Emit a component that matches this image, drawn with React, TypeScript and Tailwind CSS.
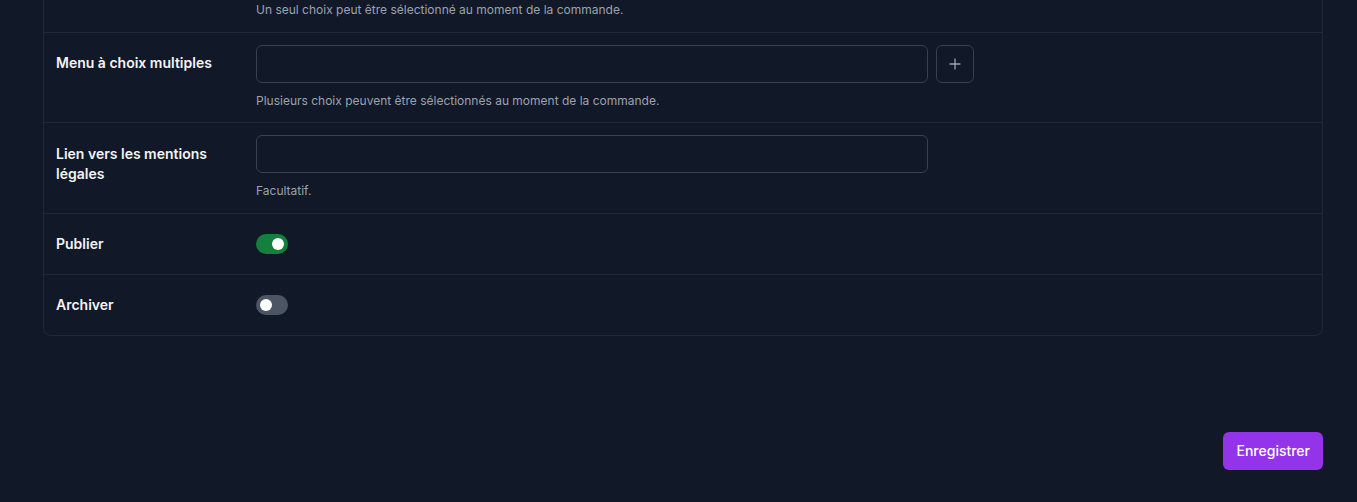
const Toggle = ({ on }: { on: boolean }) => (
  <button
    type="button"
    className={
      on
        ? 'relative mt-2 flex h-5 w-8 items-center justify-end rounded-full bg-[#15803d] px-1'
        : 'relative mt-2 flex h-5 w-8 items-center justify-start rounded-full bg-[#4b5563] px-1'
    }
  >
    <span className="h-3 w-3 rounded-full bg-white" />
  </button>
)

const Label = ({ children, tall }: { children: React.ReactNode; tall?: boolean }) => (
  <div
    className={
      tall
        ? 'w-[188px] shrink-0 pt-[9px] text-sm font-semibold leading-5 text-gray-100'
        : 'w-[188px] shrink-0 pt-2 text-sm font-semibold leading-5 text-gray-100'
    }
  >
    {children}
  </div>
)

const Help = ({ children }: { children: React.ReactNode }) => (
  <p className="mt-2 text-xs leading-[19px] text-[#9ca3af]">{children}</p>
)

const App = () => {
  return (
    <div
      className="flex min-h-screen w-full flex-col bg-[#111827] pl-[43px] pr-[34px] pb-[32px]"
      style={{ fontFamily: 'Inter, "Noto Sans", sans-serif' }}
    >
      <div className="rounded-b-lg border-x border-b border-[#1f2937]">
        <div className="flex gap-3 px-3 pb-3">
          <div className="w-[188px] shrink-0" />
          <p className="text-xs leading-5 text-[#9ca3af]">
            Un seul choix peut être sélectionné au moment de la commande.
          </p>
        </div>

        <div className="flex gap-3 border-t border-[#1f2937] px-3 py-3">
          <Label>Menu à choix multiples</Label>
          <div>
            <div className="flex gap-2">
              <input className="h-[38px] w-[672px] rounded-md border border-[#374151] bg-[#111827] px-3 text-sm text-gray-100 outline-none" />
              <button
                type="button"
                className="flex h-[38px] w-[38px] items-center justify-center rounded-md border border-[#374151] text-[#9ca3af]"
              >
                <svg width="12" height="12" viewBox="0 0 12 12" fill="none" stroke="currentColor" strokeWidth="1.3">
                  <path d="M6 0.5v11M0.5 6h11" />
                </svg>
              </button>
            </div>
            <Help>Plusieurs choix peuvent être sélectionnés au moment de la commande.</Help>
          </div>
        </div>

        <div className="flex gap-3 border-t border-[#1f2937] px-3 pt-3 pb-[13px]">
          <Label tall>Lien vers les mentions légales</Label>
          <div>
            <input className="h-[38px] w-[672px] rounded-md border border-[#374151] bg-[#111827] px-3 text-sm text-gray-100 outline-none" />
            <Help>Facultatif.</Help>
          </div>
        </div>

        <div className="flex gap-3 border-t border-[#1f2937] px-3 py-3">
          <Label>Publier</Label>
          <div className="h-9">
            <Toggle on />
          </div>
        </div>

        <div className="flex gap-3 border-t border-[#1f2937] px-3 py-3">
          <Label>Archiver</Label>
          <div className="h-9">
            <Toggle on={false} />
          </div>
        </div>
      </div>

      <div className="mt-auto flex justify-end">
        <button
          type="button"
          className="h-[38px] rounded-md bg-[#9333ea] px-[13px] text-sm font-medium text-white"
        >
          Enregistrer
        </button>
      </div>
    </div>
  )
}

export default App
